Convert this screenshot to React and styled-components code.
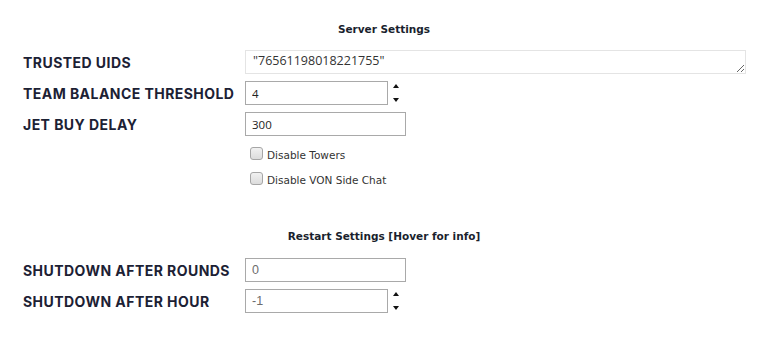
import React from "react";
import styled, { createGlobalStyle } from "styled-components";

const Global = createGlobalStyle`
  html, body { margin: 0; padding: 0; background: #fff; }
  body { font-family: "Open Sans", sans-serif; }
`;

const Page = styled.div`
  width: 768px;
  padding-top: 21px;
  display: flex;
  flex-direction: column;
`;

const SectionTitle = styled.div`
  height: 16px;
  line-height: 16px;
  text-align: center;
  font-family: "DejaVu Sans", sans-serif;
  font-weight: bold;
  font-size: 10.5px;
  color: #1a1f2e;
  margin-bottom: ${(p) => p.$bottom ?? 14}px;
`;

const FormGrid = styled.div`
  display: grid;
  grid-template-columns: 222px 1fr;
  row-gap: 7px;
  padding-left: 23px;
  padding-right: 22px;
  align-items: center;
`;

const Label = styled.label`
  font-family: Inter, sans-serif;
  font-weight: 700;
  font-size: 14px;
  letter-spacing: 0.45px;
  color: #1c2134;
  white-space: nowrap;
`;

const Field = styled.div`
  display: flex;
  align-items: center;
  gap: 5px;
`;

const TextArea = styled.textarea`
  box-sizing: border-box;
  width: 501px;
  height: 24px;
  margin: 0;
  padding: 0 7px;
  border: 1px solid #e4e4e4;
  font-family: "Open Sans", sans-serif;
  font-size: 12.5px;
  line-height: 20px;
  color: #333;
  resize: both;
  outline: none;
  overflow: hidden;
`;

const Input = styled.input`
  box-sizing: border-box;
  width: ${(p) => p.$w}px;
  height: 24px;
  margin: 0;
  padding: 0 6px;
  border: 1px solid #a9a9a9;
  font-family: ${(p) => (p.$arial ? '"Liberation Sans", sans-serif' : '"Open Sans", sans-serif')};
  font-size: ${(p) => (p.$arial ? 12.5 : 11.5)}px;
  color: ${(p) => (p.$arial ? "#6d6d6d" : "#222")};
  outline: none;
  background: #fff;
`;

const Spinner = styled.div`
  display: flex;
  flex-direction: column;
  justify-content: space-between;
  height: 18px;
  width: 7px;
`;

const Tri = styled.span`
  width: 0;
  height: 0;
  border-left: 3.5px solid transparent;
  border-right: 3.5px solid transparent;
  ${(p) =>
    p.$down
      ? "border-top: 4px solid #111;"
      : "border-bottom: 4px solid #111;"}
`;

const Checks = styled.div`
  display: flex;
  flex-direction: column;
  padding-left: 250px;
  margin-top: 5px;
  margin-bottom: 37px;
`;

const CheckRow = styled.label`
  height: 25px;
  display: flex;
  align-items: center;
  gap: 4px;
  font-family: "DejaVu Sans", sans-serif;
  font-size: 10.5px;
  color: #333;
  padding-top: 2px;
  box-sizing: border-box;
`;

const Box = styled.span`
  box-sizing: border-box;
  width: 13px;
  height: 13px;
  border: 1px solid #a6a6a6;
  border-radius: 3px;
  background: linear-gradient(#f1f1f1, #dcdcdc);
  margin-top: -2px;
`;

const Num = ({ w, value, arial }) => (
  <Field>
    <Input $w={w} defaultValue={value} $arial={arial} />
    <Spinner>
      <Tri />
      <Tri $down />
    </Spinner>
  </Field>
);

export default function App() {
  return (
    <>
      <Global />
      <Page>
        <SectionTitle $bottom={13}>Server Settings</SectionTitle>
        <FormGrid>
          <Label>TRUSTED UIDS</Label>
          <Field>
            <TextArea defaultValue={'"76561198018221755"'} />
          </Field>
          <Label>TEAM BALANCE THRESHOLD</Label>
          <Num w={143} value="4" />
          <Label>JET BUY DELAY</Label>
          <Field>
            <Input $w={161} defaultValue="300" />
          </Field>
        </FormGrid>
        <Checks>
          <CheckRow>
            <Box />
            Disable Towers
          </CheckRow>
          <CheckRow>
            <Box />
            Disable VON Side Chat
          </CheckRow>
        </Checks>
        <SectionTitle>Restart Settings [Hover for info]</SectionTitle>
        <FormGrid>
          <Label>SHUTDOWN AFTER ROUNDS</Label>
          <Field>
            <Input $w={161} defaultValue="0" $arial />
          </Field>
          <Label>SHUTDOWN AFTER HOUR</Label>
          <Num w={143} value="-1" arial />
        </FormGrid>
      </Page>
    </>
  );
}
